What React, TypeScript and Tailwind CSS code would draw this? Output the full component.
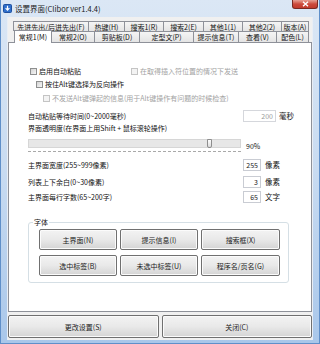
const rowOne = [
  { label: "先进先出/后进先出(F)", w: "w-[75px]" },
  { label: "热键(H)", w: "w-[36px]" },
  { label: "搜索1(R)", w: "w-[39px]" },
  { label: "搜索2(E)", w: "w-[40px]" },
  { label: "其他1(1)", w: "w-[39px]" },
  { label: "其他2(2)", w: "w-[39px]" },
  { label: "版本(A)", w: "w-[28px]" },
];

const rowTwo = [
  { label: "常规2(O)", w: "w-[42px]" },
  { label: "剪贴板(D)", w: "w-[45px]" },
  { label: "定型文(P)", w: "w-[54px]" },
  { label: "提示信息(T)", w: "w-[45px]" },
  { label: "查看(V)", w: "w-[38px]" },
  { label: "配色(L)", w: "w-[33px]" },
];

const fontButtons = [
  ["主界面(N)", "提示信息(I)", "搜索框(X)"],
  ["选中标签(B)", "未选中标签(U)", "程序名/页名(G)"],
];

const btn =
  "flex items-center justify-center rounded-[2px] border border-[#707070] bg-linear-to-b from-[#f3f3f3] via-[#e9e9e9] to-[#d4d4d4] shadow-[inset_0_0_0_1px_#fbfbfb] text-[#1b1b1b]";

function Check({ disabled }: { disabled?: boolean }) {
  return (
    <span
      className={
        disabled
          ? "block w-[7px] h-[7px] border border-[#c4c4c4] bg-[#f3f3f3]"
          : "block w-[7px] h-[7px] border border-[#8e8f8f] bg-linear-to-br from-[#d4d4d4] to-[#f6f6f6]"
      }
    />
  );
}

function NumRow({ label, value, unit }: { label: string; value: string; unit: string }) {
  return (
    <div className="flex items-center h-[12px]">
      <span className="w-[215px]">{label}</span>
      <span className="w-[18px] h-[12px] border border-[#c9ccd3] bg-white text-right pr-[2px] leading-[10px] text-[#222]">
        {value}
      </span>
      <span className="ml-[4px] text-[7.5px]">{unit}</span>
    </div>
  );
}

export default function App() {
  return (
    <div className="w-[320px] h-[344px] overflow-hidden flex flex-col bg-linear-to-b from-[#dbe7f5] via-[#c8dbf1] to-[#a9c7ea] border-x border-b border-[#5f8fc9] font-['Noto_Sans_CJK_SC','Liberation_Sans',sans-serif] text-[7px] leading-[12px] text-[#111]">
      {/* title bar */}
      <div className="relative h-[17px] flex items-center pl-[2px]">
        <svg width="9" height="9" viewBox="0 0 9 9">
          <rect x="0.5" y="0.5" width="8" height="8" rx="1" fill="#2f6fcc" stroke="#1d4f9e" />
          <path d="M4.5 1.8v4M2.6 4.2l1.9 2 1.9-2" stroke="#fff" strokeWidth="1.2" fill="none" />
        </svg>
        <span className="ml-[3px] text-[7.5px] text-[#1a1a1a]">设置界面(Clibor ver1.4.4)</span>
        <div className="absolute right-[1px] top-0 w-[26px] h-[9px] rounded-b-[3px] border border-t-0 border-[#7a2a22] bg-linear-to-b from-[#e6a095] via-[#cc4a3c] to-[#c23a2c] flex items-center justify-center">
          <svg width="7" height="6" viewBox="0 0 7 6">
            <path d="M1 0.8l5 4.4M6 0.8l-5 4.4" stroke="#fff" strokeWidth="1.4" />
          </svg>
        </div>
      </div>

      {/* client */}
      <div className="flex-1 ml-[6px] mr-[6px] mb-[3px] bg-[#f0f0f0] border-l border-r border-[#e9eef5] flex flex-col">
        <div className="mt-[4px] ml-[5px] flex h-[10px]">
          {rowOne.map((t, i) => (
            <div
              key={t.label}
              className={`${t.w} h-[10px] flex items-center justify-center border-t border-l border-[#8e9199] bg-linear-to-b from-[#f5f5f5] to-[#e4e4e4] ${
                i === rowOne.length - 1 ? "border-r" : ""
              }`}
            >
              {t.label}
            </div>
          ))}
        </div>
        <div className="ml-[6px] flex items-end h-[11px]">
          <div className="relative z-10 w-[38px] h-[13px] -mb-[1px] pb-[1px] flex items-center justify-center border-t border-l border-r border-[#8e9199] bg-white">
            常规1(M)
          </div>
          {rowTwo.map((t, i) => (
            <div
              key={t.label}
              className={`${t.w} h-[11px] flex items-center justify-center border-t border-[#8e9199] bg-linear-to-b from-[#f5f5f5] to-[#e4e4e4] ${
                i === 0 ? "" : "border-l"
              } ${i === rowTwo.length - 1 ? "border-r" : ""}`}
            >
              {t.label}
            </div>
          ))}
        </div>

        {/* tab page */}
        <div className="h-[270px] border border-[#8e9199] bg-white pl-[19px] flex flex-col">
          <div className="mt-[22px] flex items-center h-[12px]">
            <div className="w-[101px] ml-[2px] flex items-center gap-[2px]">
              <Check />
              <span>启用自动粘贴</span>
            </div>
            <div className="flex items-center gap-[2px] text-[#a3a3a3]">
              <Check disabled />
              <span>在取得插入符位置的情况下发送</span>
            </div>
          </div>
          <div className="mt-[1px] ml-[8px] flex items-center gap-[2px] h-[12px]">
            <Check />
            <span>按住Alt键选择为反向操作</span>
          </div>
          <div className="mt-[2px] ml-[15px] flex items-center gap-[2px] h-[12px] text-[#a3a3a3]">
            <Check disabled />
            <span>不发送Alt键弹起的信息(用于Alt键操作有问题的时候检查)</span>
          </div>
          <div className="mt-[6px] flex items-center h-[12px]">
            <span className="w-[215px]">自动粘贴等待时间(0~2000毫秒)</span>
            <span className="w-[33px] h-[12px] border border-[#d5d7dc] bg-white text-right pr-[2px] leading-[10px] text-[#9a9a9a]">
              200
            </span>
            <span className="ml-[3px] text-[7.5px]">毫秒</span>
          </div>
          <div className="h-[12px] flex items-center">界面透明度(在界面上用Shift + 鼠标滚轮操作)</div>
          <div className="mt-[5px] flex items-start">
            <div className="w-[213px] flex flex-col">
              <div className="relative h-[9px] border border-[#d6d6d6] bg-[#e7e7e7]">
                <div className="absolute left-[178px] -top-[1px] w-[5px] h-[9px] rounded-b-[2px] border border-[#8d8d8d] bg-linear-to-b from-[#fdfdfd] to-[#dcdcdc]" />
              </div>
              <div className="mt-[3px] h-[1px] border-t border-dashed border-[#a9a9a9]" />
            </div>
            <span className="ml-[5px] mt-[1px]">90%</span>
          </div>
          <div className="mt-[7px]">
            <NumRow label="主界面宽度(255~999像素)" value="255" unit="像素" />
          </div>
          <div className="mt-[5px]">
            <NumRow label="列表上下余白(0~30像素)" value="3" unit="像素" />
          </div>
          <div className="mt-[3px]">
            <NumRow label="主界面每行字数(65~200字)" value="65" unit="文字" />
          </div>

          {/* font group */}
          <div className="relative mt-[19px] w-[261px] h-[61px] rounded-[3px] border border-[#d5dfe5] pl-[10px] pt-[6px] flex flex-col gap-[5px]">
            <span className="absolute -top-[7px] left-[4px] bg-white px-[1px]">字体</span>
            {fontButtons.map((row) => (
              <div key={row[0]} className="flex gap-[3px]">
                {row.map((b, i) => (
                  <div key={b} className={`${btn} h-[21px] ${i === 2 ? "w-[79px]" : "w-[78px]"}`}>
                    {b}
                  </div>
                ))}
              </div>
            ))}
          </div>
        </div>

        <div className="mt-[3px] flex gap-[3px]">
          <div className={`${btn} w-[151px] h-[23px]`}>更改设置(S)</div>
          <div className={`${btn} w-[151px] h-[23px]`}>关闭(C)</div>
        </div>
      </div>
    </div>
  );
}
